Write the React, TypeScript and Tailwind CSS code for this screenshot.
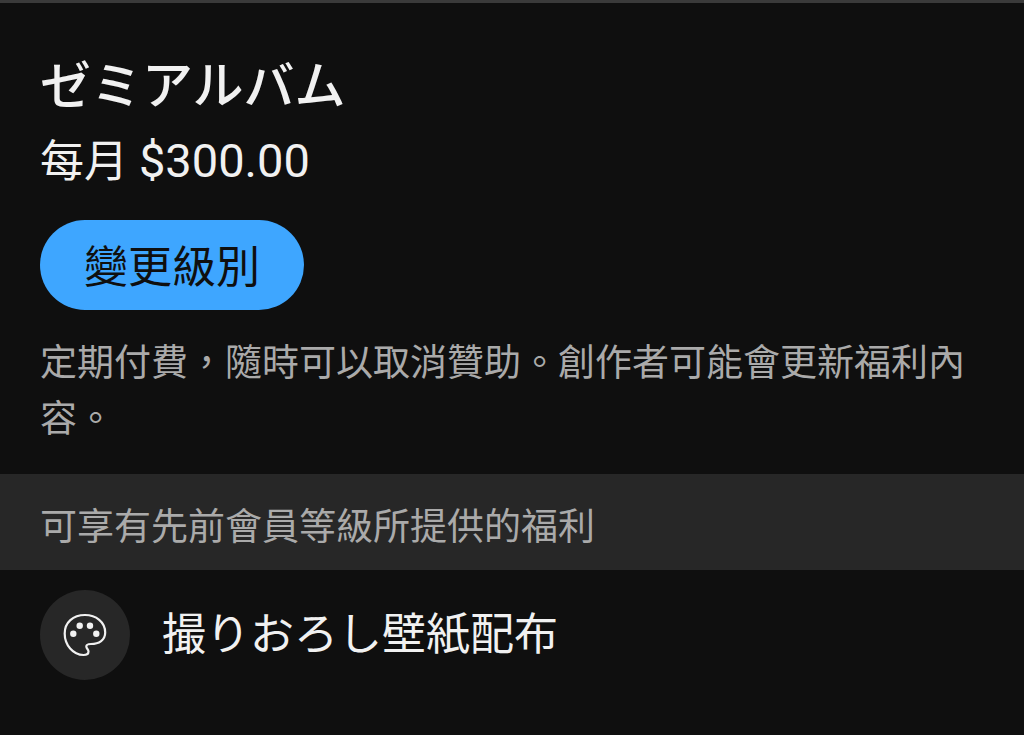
import React from 'react';

export default function App() {
  return (
    <main className="min-h-screen bg-[#0f0f0f] border-t-3 border-[#3a3a3a] text-[#f1f1f1] font-['Roboto','Noto_Sans_CJK_TC',sans-serif]">
      {/* Tier summary */}
      <section className="px-10 pt-[50px] pb-[26px]">
        <h1 lang="ja" className="text-[51px] leading-[68px] font-medium font-['Roboto','Noto_Sans_CJK_JP',sans-serif]">ゼミアルバム</h1>
        <p className="mt-2 text-[44px] leading-[64px]">
          每月 <span className="text-[47px]">$300.00</span>
        </p>
        <button type="button" className="mt-[26px] pt-4 pb-2.5 px-11 rounded-full bg-[#3ea6ff] text-[#0f0f0f] text-[44px] leading-[64px]">
          變更級別
        </button>
        <p className="mt-[26px] text-[37px] leading-[56px] text-[#aaaaaa]">
          定期付費，隨時可以取消贊助。創作者可能會更新福利內容。
        </p>
      </section>

      <h2 className="px-10 pt-[26px] pb-3.5 bg-[#272727] text-[37px] leading-[56px] text-[#aaaaaa]">可享有先前會員等級所提供的福利</h2>

      {/* Perks */}
      <ul className="px-10 py-5">
        <li className="flex items-center gap-8">
          <span className="flex size-[90px] shrink-0 items-center justify-center rounded-full bg-[#272727]">
            <PaletteIcon />
          </span>
          <span lang="ja" className="text-[44px] leading-[64px] font-['Roboto','Noto_Sans_CJK_JP',sans-serif]">撮りおろし壁紙配布</span>
        </li>
      </ul>
    </main>
  );
}

const PaletteIcon = () => (
  <svg viewBox="0 0 44 44" className="size-11" fill="none" aria-hidden="true">
    <path
      d="M22 2C10 2 1.700 9.500 1.700 20.500C1.700 32 10 42 20.500 42C24 42 25.500 40.500 25.500 38.500C25.500 36.500 23.300 35.500 23.300 33.500C23.300 31.500 25 31 28 31C36 31 42.200 27 42.200 19.500C42.200 9 33 2 22 2Z"
      stroke="currentColor"
      strokeWidth="2.200"
      strokeLinejoin="round"
    />
    <g fill="currentColor">
      <circle cx="10.300" cy="20.700" r="3.200" />
      <circle cx="16.700" cy="12.700" r="3.200" />
      <circle cx="27" cy="12.700" r="3.200" />
      <circle cx="33.300" cy="20.700" r="3.200" />
    </g>
  </svg>
);
